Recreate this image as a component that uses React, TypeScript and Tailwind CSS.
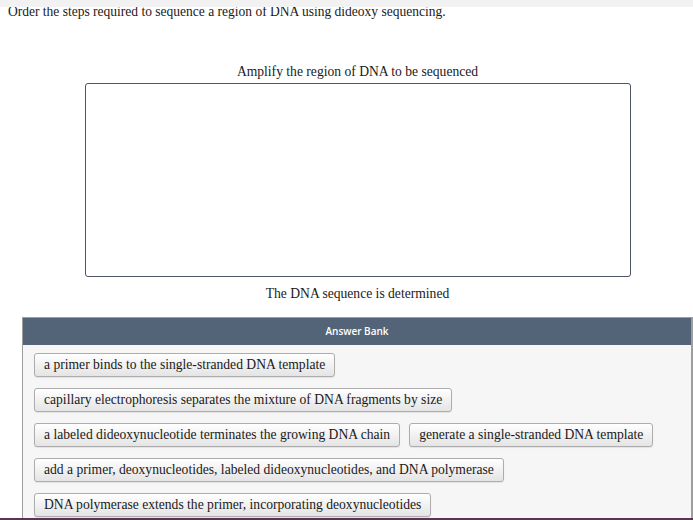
const serif = "font-['Liberation_Serif','Times_New_Roman',serif]";

const answers: string[][] = [
  ["a primer binds to the single-stranded DNA template"],
  ["capillary electrophoresis separates the mixture of DNA fragments by size"],
  [
    "a labeled dideoxynucleotide terminates the growing DNA chain",
    "generate a single-stranded DNA template",
  ],
  ["add a primer, deoxynucleotides, labeled dideoxynucleotides, and DNA polymerase"],
  ["DNA polymerase extends the primer, incorporating deoxynucleotides"],
];

function Chip({ label }: { label: string }) {
  return (
    <div className="rounded-[3px] border border-[#adadad] bg-gradient-to-b from-white to-[#e4e4e4] px-[9px] h-[24px] flex items-center shadow-[0_1px_1px_rgba(0,0,0,0.08)]">
      <span className={`${serif} text-[13.6px] leading-none text-[#1a1a1a] whitespace-nowrap`}>{label}</span>
    </div>
  );
}

function AnswerBank() {
  return (
    <div className="border border-[#9e9e9e] border-r-2 bg-[#f6f6f6]">
      <div className="h-[27px] bg-[#536479] flex items-center justify-center">
        <span className="font-['Open_Sans',sans-serif] font-semibold text-[10px] text-white">Answer Bank</span>
      </div>
      <div className="flex flex-col gap-[11px] pl-[11px] pt-[8px] pb-[2px]">
        {answers.map((row, i) => (
          <div key={i} className="flex gap-[9px]">
            {row.map((a) => (
              <Chip key={a} label={a} />
            ))}
          </div>
        ))}
      </div>
    </div>
  );
}

export default function App() {
  return (
    <div className="relative w-[693px] h-[520px] overflow-hidden bg-white">
      <p className={`${serif} ml-[8px] pt-[1px] text-[15px] leading-[20px] text-[#1a1a1a] whitespace-nowrap origin-left scale-x-[0.9]`}>
        Order the steps required to sequence a region of DNA using dideoxy sequencing.
      </p>
      <div className="absolute left-0 right-0 top-0 h-[7px] bg-[#f2f2f2]" />
      <div className="ml-[22px] mt-[42px] flex flex-col">
        <p className={`${serif} text-center text-[13.6px] leading-[18px] text-[#1a1a1a]`}>
          Amplify the region of DNA to be sequenced
        </p>
        <div className="mx-auto mt-[2px] w-[546px] h-[194px] rounded-[3px] border border-[#4d5463] bg-white" />
        <p className={`${serif} text-center text-[13.6px] leading-[18px] mt-[8px] text-[#1a1a1a]`}>
          The DNA sequence is determined
        </p>
        <div className="mt-[14px]">
          <AnswerBank />
        </div>
      </div>
      <div className="absolute left-0 right-0 bottom-0 h-[2px] bg-[#5b3550]" />
    </div>
  );
}
